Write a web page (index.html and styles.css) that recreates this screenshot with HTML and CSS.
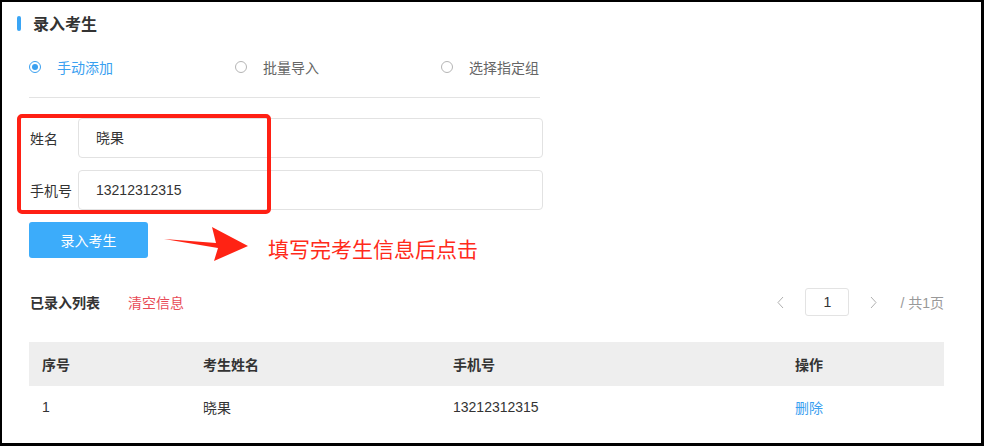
FILE: index.html
```html
<!DOCTYPE html>
<html lang="zh-CN">
<head>
    <meta charset="UTF-8">
    <title>录入考生</title>
    <link rel="stylesheet" href="styles.css">
</head>
<body>
    <div class="frame">
        <h2 class="heading">录入考生</h2>

        <div class="radio-row">
            <label class="radio active"><span class="dot"></span>手动添加</label>
            <label class="radio"><span class="dot"></span>批量导入</label>
            <label class="radio"><span class="dot"></span>选择指定组</label>
        </div>
        <div class="divider"></div>

        <div class="form-box">
            <div class="form-row">
                <span class="form-label">姓名</span>
                <div class="form-input">晓果</div>
            </div>
            <div class="form-row">
                <span class="form-label">手机号</span>
                <div class="form-input num">13212312315</div>
            </div>
            <!-- annotation box over the fields -->
            <div class="mark-box"></div>
        </div>

        <div class="action-row">
            <button class="btn">录入考生</button>
            <svg class="arrow" width="84" height="34" viewBox="0 0 84 34">
                <polygon points="0,12 52,16 48,0 84,19 50,34 54,21" fill="#ff2314"/>
            </svg>
            <span class="tip">填写完考生信息后点击</span>
        </div>

        <div class="list-bar">
            <span class="list-title">已录入列表</span>
            <a class="clear-link" href="#">清空信息</a>
            <div class="pager">
                <svg class="pager-arrow" width="7" height="13" viewBox="0 0 7 13">
                    <polyline points="6,1 1,6.5 6,12" fill="none" stroke="#b0b0b0" stroke-width="1"/>
                </svg>
                <div class="pager-box">1</div>
                <svg class="pager-arrow" width="7" height="13" viewBox="0 0 7 13">
                    <polyline points="1,1 6,6.5 1,12" fill="none" stroke="#b0b0b0" stroke-width="1"/>
                </svg>
                <span class="pager-total">/ 共1页</span>
            </div>
        </div>

        <table class="list-table">
            <thead>
                <tr>
                    <th class="col-1">序号</th>
                    <th class="col-2">考生姓名</th>
                    <th class="col-3">手机号</th>
                    <th>操作</th>
                </tr>
            </thead>
            <tbody>
                <tr>
                    <td class="num">1</td>
                    <td>晓果</td>
                    <td class="num">13212312315</td>
                    <td><a class="del-link" href="#">删除</a></td>
                </tr>
            </tbody>
        </table>
    </div>
</body>
</html>
```

FILE: styles.css
```css
html, body {
    margin: 0;
    padding: 0;
    background: #fff;
}

body {
    font-family: "Liberation Sans", "Noto Sans CJK SC", sans-serif;
    color: #333;
}

.frame {
    width: 984px;
    height: 446px;
    box-sizing: border-box;
    border-style: solid;
    border-color: #000;
    border-width: 2px 3px 3px 2px;
    padding: 0 0 0 27px;
    position: relative;
    overflow: hidden;
}

.heading {
    position: relative;
    margin: 11px 0 0 4px;
    font-size: 16px;
    line-height: 20px;
    font-weight: bold;
    color: #333;
    font-family: "Noto Sans CJK SC", sans-serif;
}

.heading::before {
    content: "";
    position: absolute;
    left: -16px;
    top: 3px;
    width: 4px;
    height: 15px;
    border-radius: 2px;
    background: #3aa5f5;
}

.radio-row {
    display: flex;
    margin-top: 24px;
    height: 20px;
    align-items: center;
}

.radio {
    display: flex;
    align-items: center;
    font-size: 14px;
    color: #666;
    font-family: "Noto Sans CJK SC", sans-serif;
    width: 206px;
}

.radio .dot {
    width: 10px;
    height: 10px;
    border: 1px solid #b5b5b5;
    border-radius: 50%;
    margin: 0 16px 0 0;
    box-sizing: content-box;
    position: relative;
}

.radio.active {
    color: #3aa0f0;
}

.radio.active .dot {
    border-color: #3aa0f0;
}

.radio.active .dot::after {
    content: "";
    position: absolute;
    left: 2px;
    top: 2px;
    width: 6px;
    height: 6px;
    border-radius: 50%;
    background: #3aa0f0;
}

.divider {
    width: 511px;
    height: 1px;
    background: #e3e3e3;
    margin-top: 20px;
}

.form-box {
    position: relative;
    margin-top: 20px;
    width: 516px;
}

.form-row {
    display: flex;
    align-items: center;
    margin-bottom: 12px;
}

.form-label {
    width: 48px;
    padding-left: 1px;
    font-size: 14px;
    color: #333;
    font-family: "Noto Sans CJK SC", sans-serif;
}

.form-input {
    width: 446px;
    height: 38px;
    line-height: 38px;
    border: 1px solid #e2e2e2;
    border-radius: 4px;
    padding-left: 17px;
    font-size: 14px;
    color: #333;
}

.mark-box {
    position: absolute;
    left: -12px;
    top: -4px;
    width: 246px;
    height: 92px;
    border: 4px solid #ff2014;
    border-radius: 5px;
}

.action-row {
    display: flex;
    align-items: center;
    margin-top: 1px;
    height: 36px;
}

.btn {
    width: 119px;
    height: 36px;
    border: none;
    border-radius: 3px;
    background: #3cacfa;
    color: #fff;
    font-size: 14px;
    font-family: "Noto Sans CJK SC", sans-serif;
    cursor: pointer;
}

.arrow {
    margin-left: 16px;
    margin-top: 8px;
}

.tip {
    margin-left: 20px;
    margin-top: 15px;
    font-size: 21px;
    color: #ff2a1a;
    font-family: "Noto Sans CJK SC", sans-serif;
}

.list-bar {
    display: flex;
    align-items: center;
    margin-top: 30px;
    width: 915px;
    height: 28px;
}

.list-title {
    margin-left: 1px;
    font-size: 14px;
    font-weight: bold;
    font-family: "Noto Sans CJK SC", sans-serif;
}

.clear-link {
    margin-left: 28px;
    font-size: 14px;
    color: #e84b57;
    text-decoration: none;
    font-family: "Noto Sans CJK SC", sans-serif;
}

.pager {
    margin-left: auto;
    display: flex;
    align-items: center;
}

.pager-box {
    width: 42px;
    height: 26px;
    line-height: 26px;
    margin: 0 21px;
    border: 1px solid #e3e3e3;
    border-radius: 3px;
    text-align: center;
    font-size: 14px;
    color: #333;
}

.pager-total {
    margin-left: 23px;
    font-size: 14px;
    color: #999;
}

.list-table {
    margin-top: 26px;
    width: 915px;
    border-collapse: collapse;
    font-size: 14px;
    font-family: "Noto Sans CJK SC", sans-serif;
}

.list-table th {
    height: 44px;
    background: #eee;
    text-align: left;
    font-weight: bold;
    padding: 0 0 0 13px;
    color: #333;
}

.list-table td {
    height: 42px;
    padding: 0 0 0 13px;
    color: #333;
}

.col-1 { width: 148px; }
.col-2 { width: 237px; }
.col-3 { width: 329px; }

.num {
    font-family: "Liberation Sans", sans-serif;
}

.del-link {
    color: #3aa0f0;
    text-decoration: none;
}
```
